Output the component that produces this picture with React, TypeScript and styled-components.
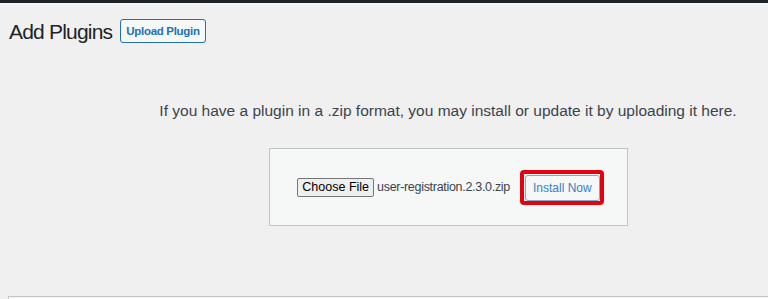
import styled, { createGlobalStyle } from 'styled-components'

const GlobalStyle = createGlobalStyle`
  html, body {
    margin: 0;
    padding: 0;
    background: #f0f0f1;
    overflow: hidden;
    font-family: "Liberation Sans", Arial, sans-serif;
    color: #3c434a;
  }
`

const AdminBar = styled.div`
  height: 3px;
  background: #1d2327;
  border-bottom: 1px solid #f6f7f7;
`

const Page = styled.div`
  width: 880px;
  padding-left: 8px;
  height: 295px;
  display: flex;
  flex-direction: column;
`

const HeaderRow = styled.div`
  display: flex;
  align-items: center;
  gap: 8px;
  padding: 15px 0 0 1px;
`

const Title = styled.h1`
  margin: 0;
  font-size: 21px;
  font-weight: 400;
  line-height: 24px;
  letter-spacing: -0.8px;
  color: #1d2327;
  position: relative;
  top: 1px;
`

const PageAction = styled.button`
  font-family: inherit;
  height: 24px;
  padding: 0 5px;
  font-size: 11.5px;
  font-weight: 700;
  letter-spacing: -0.3px;
  color: #2271b1;
  background: #f6f7f7;
  border: 1px solid #2271b1;
  border-radius: 3px;
`

const UploadArea = styled.div`
  display: flex;
  flex-direction: column;
  align-items: center;
  margin-top: 57px;
`

const Help = styled.p`
  margin: 0;
  font-size: 15.5px;
  line-height: 22px;
  color: #3c434a;
`

const UploadForm = styled.form`
  margin-top: 26px;
  width: 356px;
  height: 76px;
  background: #f6f7f7;
  border: 1px solid #c3c4c7;
  display: flex;
  align-items: center;
  justify-content: center;
  gap: 10px;
  padding-left: 5px;
  box-sizing: content-box;
  width: 352px;
`

const FilePick = styled.div`
  display: flex;
  align-items: center;
  gap: 3px;
  font-size: 12.5px;
  letter-spacing: -0.3px;
  color: #3c434a;
`

const ChooseButton = styled.span`
  display: inline-flex;
  align-items: center;
  height: 17px;
  padding: 0 4px;
  font-size: 12.5px;
  letter-spacing: 0;
  color: #000;
  background: #efefef;
  border: 1px solid #767676;
  border-radius: 2px;
`

const Highlight = styled.div`
  border: 4px solid #e3000f;
  border-radius: 4px;
  padding: 1px 0 0 1px;
  display: flex;
`

const SubmitButton = styled.button`
  font-family: inherit;
  height: 26px;
  padding: 0 7px;
  font-size: 12px;
  color: #3582c4;
  background: #f6f7f7;
  border: 1px solid #8aa6c1;
  border-radius: 3px;
`

const BottomBox = styled.div`
  margin-top: auto;
  margin-right: -20px;
  height: 2px;
  border-top: 1px solid #c3c4c7;
  border-left: 1px solid #c3c4c7;
  background: #f6f7f7;
`

export default function App() {
  return (
    <>
      <GlobalStyle />
      <AdminBar />
      <Page>
        <HeaderRow>
          <Title>Add Plugins</Title>
          <PageAction>Upload Plugin</PageAction>
        </HeaderRow>
        <UploadArea>
          <Help>
            If you have a plugin in a .zip format, you may install or update it by uploading it here.
          </Help>
          <UploadForm onSubmit={e => e.preventDefault()}>
            <FilePick>
              <ChooseButton>Choose File</ChooseButton>
              <span>user-registration.2.3.0.zip</span>
            </FilePick>
            <Highlight>
              <SubmitButton type='submit'>Install Now</SubmitButton>
            </Highlight>
          </UploadForm>
        </UploadArea>
        <BottomBox />
      </Page>
    </>
  )
}
